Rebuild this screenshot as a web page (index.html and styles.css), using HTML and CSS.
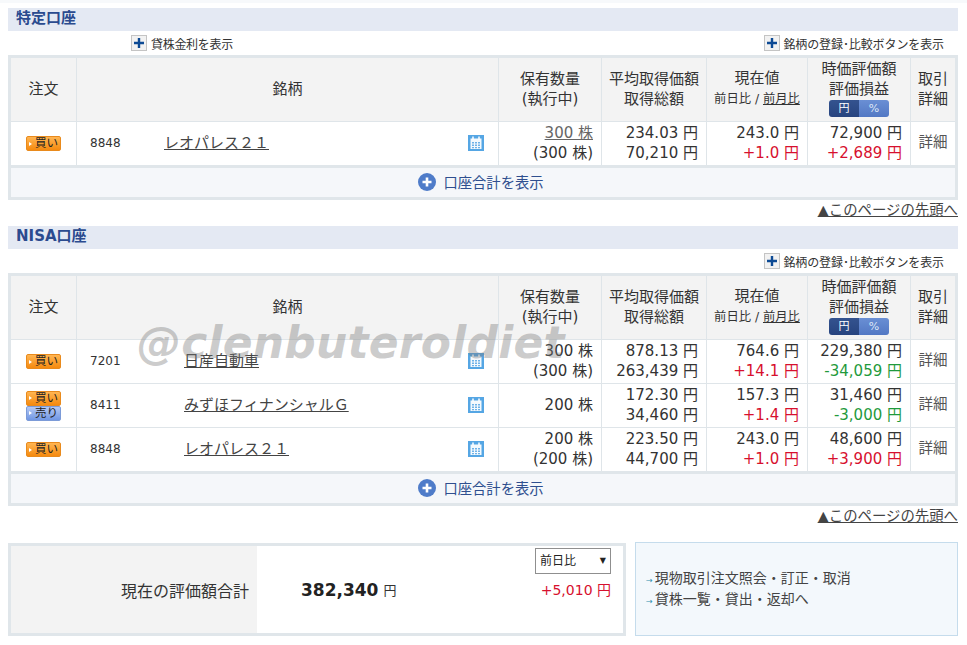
FILE: index.html
```html
<!DOCTYPE html>
<html lang="ja">
<head>
    <meta charset="UTF-8">
    <title>保有証券一覧</title>
    <link rel="stylesheet" href="styles.css">
</head>
<body>
    <svg class="defs" width="0" height="0">
        <symbol id="i-cal" viewBox="0 0 16 16">
            <rect width="16" height="16" fill="#55a6e4"/>
            <rect x="2.5" y="3.5" width="11" height="10.5" fill="#f4f9fd"/>
            <path d="M5 1.5v3M11 1.5v3" stroke="#fff" stroke-width="1.5"/>
            <path d="M4 7h2v1.6H4zM7 7h2v1.6H7zM10 7h2v1.6h-2zM4 9.5h2v1.6H4zM7 9.5h2v1.6H7zM10 9.5h2v1.6h-2zM4 12h2v1.2H4zM7 12h2v1.2H7zM10 12h2v1.2h-2z" fill="#6eb2e8"/>
        </symbol>
        <symbol id="i-plus" viewBox="0 0 16 16">
            <rect x=".5" y=".5" width="15" height="15" fill="#f2f2f2" stroke="#c4c4c4"/>
            <path d="M8 3v10M3 8h10" stroke="#0d4a94" stroke-width="2.4"/>
        </symbol>
        <symbol id="i-open" viewBox="0 0 18 18">
            <circle cx="9" cy="9" r="9" fill="#4f7cc9"/>
            <path d="M9 4.5v9M4.5 9h9" stroke="#fff" stroke-width="2.6"/>
        </symbol>
    </svg>

    <div class="top-strip"></div>

    <div class="page">
        <h2 class="section-title">特定口座</h2>
        <div class="tools">
            <a class="tool tool-lending"><svg class="tool-icon"><use href="#i-plus"/></svg>貸株金利を表示</a>
            <a class="tool tool-compare"><svg class="tool-icon"><use href="#i-plus"/></svg>銘柄の登録･比較ボタンを表示</a>
        </div>
        <div class="holdings">
            <table>
                <colgroup>
                    <col class="c-order"><col class="c-name"><col class="c-qty"><col class="c-cost"><col class="c-price"><col class="c-value"><col class="c-detail">
                </colgroup>
                <thead>
                    <tr>
                        <th>注文</th>
                        <th>銘柄</th>
                        <th>保有数量<br>(執行中)</th>
                        <th>平均取得価額<br>取得総額</th>
                        <th>現在値<br><span class="th-sub">前日比 / <u>前月比</u></span></th>
                        <th class="th-value">時価評価額<br>評価損益<span class="toggle"><span class="toggle-on">円</span><span class="toggle-off">%</span></span></th>
                        <th>取引<br>詳細</th>
                    </tr>
                </thead>
                <tbody>
                    <tr>
                        <td class="order"><span class="badge buy">買い</span></td>
                        <td><div class="stock"><span class="code">8848</span><a class="stock-name">レオパレス２１</a><svg class="cal"><use href="#i-cal"/></svg></div></td>
                        <td class="num"><u class="muted">300 株</u><br>(300 株)</td>
                        <td class="num">234.03 円<br>70,210 円</td>
                        <td class="num">243.0 円<br><span class="up">+1.0 円</span></td>
                        <td class="num">72,900 円<br><span class="up">+2,689 円</span></td>
                        <td class="detail">詳細</td>
                    </tr>
                </tbody>
            </table>
            <div class="total-link"><svg class="open-icon"><use href="#i-open"/></svg>口座合計を表示</div>
        </div>
        <div class="page-top"><a>▲このページの先頭へ</a></div>

        <h2 class="section-title">NISA口座</h2>
        <div class="tools tools-end">
            <a class="tool tool-compare"><svg class="tool-icon"><use href="#i-plus"/></svg>銘柄の登録･比較ボタンを表示</a>
        </div>
        <div class="holdings">
            <table>
                <colgroup>
                    <col class="c-order"><col class="c-name"><col class="c-qty"><col class="c-cost"><col class="c-price"><col class="c-value"><col class="c-detail">
                </colgroup>
                <thead>
                    <tr>
                        <th>注文</th>
                        <th>銘柄</th>
                        <th>保有数量<br>(執行中)</th>
                        <th>平均取得価額<br>取得総額</th>
                        <th>現在値<br><span class="th-sub">前日比 / <u>前月比</u></span></th>
                        <th class="th-value">時価評価額<br>評価損益<span class="toggle"><span class="toggle-on">円</span><span class="toggle-off">%</span></span></th>
                        <th>取引<br>詳細</th>
                    </tr>
                </thead>
                <tbody>
                    <tr>
                        <td class="order"><span class="badge buy">買い</span></td>
                        <td><div class="stock nisa"><span class="code">7201</span><a class="stock-name">日産自動車</a><svg class="cal"><use href="#i-cal"/></svg></div></td>
                        <td class="num">300 株<br>(300 株)</td>
                        <td class="num">878.13 円<br>263,439 円</td>
                        <td class="num">764.6 円<br><span class="up">+14.1 円</span></td>
                        <td class="num">229,380 円<br><span class="down">-34,059 円</span></td>
                        <td class="detail">詳細</td>
                    </tr>
                    <tr>
                        <td class="order"><span class="badge buy">買い</span><span class="badge sell">売り</span></td>
                        <td><div class="stock nisa"><span class="code">8411</span><a class="stock-name">みずほフィナンシャルＧ</a><svg class="cal"><use href="#i-cal"/></svg></div></td>
                        <td class="num">200 株</td>
                        <td class="num">172.30 円<br>34,460 円</td>
                        <td class="num">157.3 円<br><span class="up">+1.4 円</span></td>
                        <td class="num">31,460 円<br><span class="down">-3,000 円</span></td>
                        <td class="detail">詳細</td>
                    </tr>
                    <tr>
                        <td class="order"><span class="badge buy">買い</span></td>
                        <td><div class="stock nisa"><span class="code">8848</span><a class="stock-name">レオパレス２１</a><svg class="cal"><use href="#i-cal"/></svg></div></td>
                        <td class="num">200 株<br>(200 株)</td>
                        <td class="num">223.50 円<br>44,700 円</td>
                        <td class="num">243.0 円<br><span class="up">+1.0 円</span></td>
                        <td class="num">48,600 円<br><span class="up">+3,900 円</span></td>
                        <td class="detail">詳細</td>
                    </tr>
                </tbody>
            </table>
            <div class="total-link"><svg class="open-icon"><use href="#i-open"/></svg>口座合計を表示</div>
        </div>
        <div class="page-top"><a>▲このページの先頭へ</a></div>

        <div class="bottom">
            <div class="summary">
                <div class="summary-label">現在の評価額合計</div>
                <div class="summary-amount"><b>382,340</b>円</div>
                <div class="summary-diff">
                    <div class="select">前日比<span class="select-arrow">▼</span></div>
                    <div class="up">+5,010 円</div>
                </div>
            </div>
            <ul class="links">
                <li>現物取引注文照会・訂正・取消</li>
                <li>貸株一覧・貸出・返却へ</li>
            </ul>
        </div>
    </div>

    <div class="watermark">@clenbuteroldiet</div>
</body>
</html>
```

FILE: styles.css
```css
body {
    margin: 0;
    background-color: #fff;
    color: #333;
    font-family: "DejaVu Sans", "Noto Sans CJK JP", sans-serif;
    font-size: 15px;
}

.defs {
    position: absolute;
}

.top-strip {
    height: 3px;
    background-color: #f7f9fb;
}

.page {
    width: 950px;
    margin: 5px 0 0 8px;
}

.section-title {
    margin: 0;
    height: 23px;
    padding-left: 8px;
    background-color: #e4e9f3;
    color: #2b4b8f;
    font-size: 15px;
    font-weight: bold;
    line-height: 21px;
}

.tools {
    display: flex;
    justify-content: space-between;
    height: 24px;
    padding: 0 14px 0 123px;
    box-sizing: border-box;
    font-size: 12px;
}

.tools-end {
    justify-content: flex-end;
}

.tool {
    display: flex;
    align-items: center;
    height: 24px;
    letter-spacing: -0.1px;
}

.tool-lending {
    letter-spacing: -0.3px;
}

.tool-icon {
    width: 16px;
    height: 16px;
    margin-right: 3px;
}

.tool-lending .tool-icon {
    margin-right: 4px;
}

.holdings {
    border: 3px solid #e0e6ea;
}

table {
    width: 944px;
    table-layout: fixed;
    border-collapse: separate;
    border-spacing: 0;
}

.c-order { width: 66px; }
.c-name { width: 422px; }
.c-qty { width: 103px; }
.c-cost { width: 105px; }
.c-price { width: 101px; }
.c-value { width: 103px; }
.c-detail { width: 44px; }

th, td {
    padding: 0;
    border-right: 1px solid #dfe5e9;
    border-bottom: 1px solid #dfe5e9;
}

th:last-child, td:last-child {
    border-right: none;
}

tbody tr:last-child td {
    border-bottom: none;
}

th {
    height: 61px;
    padding-bottom: 2px;
    background-color: #f3f3f3;
    font-size: 15px;
    font-weight: normal;
    line-height: 20px;
    text-align: center;
}

.th-sub {
    font-size: 12.3px;
}

.th-value {
    height: 59px;
    padding-bottom: 4px;
}

.toggle {
    display: flex;
    width: 60px;
    height: 17px;
    margin: 1px auto 0;
    border-radius: 3px;
    overflow: hidden;
    color: #fff;
    font-size: 11px;
    line-height: 17px;
}

.toggle-on {
    flex: 1;
    background: linear-gradient(#34538f, #27447f);
}

.toggle-off {
    flex: 1;
    background: linear-gradient(#6a8fd4, #5278c4);
    color: #dfe8f8;
}

td {
    height: 43px;
    line-height: 20px;
}

.order {
    text-align: center;
}

.badge {
    display: flex;
    align-items: center;
    box-sizing: border-box;
    width: 35px;
    height: 15px;
    margin: 0 auto;
    padding-left: 2px;
    border-radius: 2px;
    color: #222;
    font-size: 11.5px;
    line-height: 13px;
}

.badge::before {
    content: "";
    margin-right: 3px;
    border-left: 3px solid #fff;
    border-top: 2px solid transparent;
    border-bottom: 2px solid transparent;
}

.buy {
    background: linear-gradient(#ffb552, #f58a0f);
    border: 1px solid #e98a1c;
}

.sell {
    background: linear-gradient(#b4c8f4, #7097e4);
    border: 1px solid #7c9bd8;
}

.stock {
    display: flex;
    align-items: center;
    padding: 0 14px 1px 13px;
}

.code {
    width: 74px;
    font-size: 12px;
}

.nisa .code {
    width: 94px;
}

.stock-name {
    color: #444;
    text-decoration: underline;
}

.cal {
    width: 16px;
    height: 16px;
    margin-left: auto;
}

.num {
    height: 42px;
    padding: 0 8px 1px 0;
    text-align: right;
}

.muted {
    color: #666;
}

.up {
    color: #d7102e;
}

.down {
    color: #1f9a3c;
}

.detail {
    height: 40px;
    padding-bottom: 3px;
    color: #555;
    font-size: 14.5px;
    text-align: center;
}

.total-link {
    display: flex;
    align-items: center;
    justify-content: center;
    box-sizing: border-box;
    height: 32px;
    padding: 0 4px 2px 0;
    border-top: 3px solid #e0e6ea;
    background-color: #f5f7fa;
    color: #2f4f8f;
    font-size: 14.3px;
}

.open-icon {
    width: 18px;
    height: 18px;
    margin-right: 7px;
}

.page-top {
    height: 26px;
    font-size: 14.4px;
    line-height: 20px;
    text-align: right;
}

.page-top a {
    color: #444;
    text-decoration: underline;
}

.bottom {
    display: flex;
    justify-content: space-between;
    margin-top: 10px;
}

.summary {
    display: flex;
    box-sizing: border-box;
    width: 618px;
    height: 93px;
    margin-top: 1px;
    border: 3px solid #e0e6ea;
}

.summary-label {
    display: flex;
    align-items: center;
    justify-content: flex-end;
    box-sizing: border-box;
    width: 246px;
    padding-right: 8px;
    background-color: #f3f3f3;
    font-size: 16px;
}

.summary-amount {
    display: flex;
    align-items: center;
    padding-left: 44px;
    font-size: 13px;
}

.summary-amount b {
    margin-right: 5px;
    color: #222;
    font-size: 17px;
}

.summary-diff {
    margin-left: auto;
    padding: 2px 12px 0 0;
    font-size: 14px;
    text-align: right;
}

.select {
    display: flex;
    justify-content: space-between;
    box-sizing: border-box;
    width: 76px;
    height: 26px;
    margin-bottom: 5px;
    padding: 0 4px;
    border: 1px solid #8f8f8f;
    color: #222;
    font-size: 12px;
    line-height: 24px;
    text-align: left;
}

.select-arrow {
    font-size: 8px;
}

.links {
    box-sizing: border-box;
    width: 323px;
    height: 94px;
    margin: 0;
    padding: 25px 0 0 10px;
    border: 1px solid #c5dcec;
    background-color: #f3f8fc;
    color: #444;
    font-size: 14px;
    line-height: 21px;
    list-style: none;
}

.links li {
    height: 21px;
}

.links li::before {
    content: "→";
    margin-right: 2px;
    color: #2f8fb0;
    font-size: 8px;
}

.watermark {
    position: absolute;
    left: 137px;
    top: 317px;
    color: rgba(120, 120, 120, 0.38);
    font-size: 44px;
    font-style: italic;
    font-weight: bold;
    letter-spacing: 0.2px;
    pointer-events: none;
}
```
